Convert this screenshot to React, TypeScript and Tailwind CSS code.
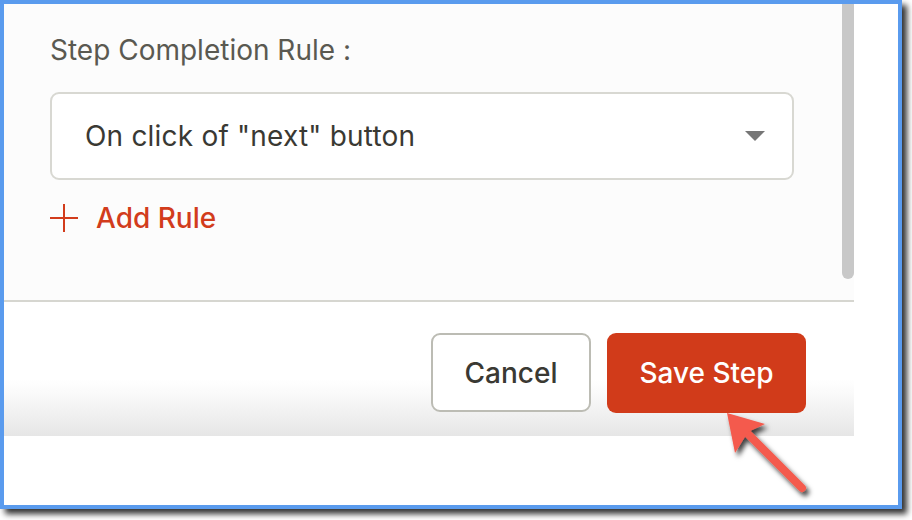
import React from "react";

export default function App() {
  return (
    <div
      className="relative w-[912px] h-[520px] bg-white overflow-hidden"
      style={{ fontFamily: "Inter, 'Noto Sans', sans-serif" }}
    >
      <div className="w-[902px] h-[509px] border-4 border-[#5a9bee] bg-white flex shadow-[5px_5px_6px_rgba(0,0,0,0.8)]">
        <div className="w-[850px] flex flex-col">
          <div className="h-[296px] bg-[#fcfcfc] flex">
            <div className="flex-1 pl-[46px] flex flex-col">
              <div className="mt-[32px] h-[28px] leading-[28px] text-[28px] text-[#5a5951]">
                Step Completion Rule :
              </div>
              <div className="mt-[28px] w-[744px] h-[88px] bg-white border-2 border-[#d8d8d2] rounded-[9px] flex items-center pl-[33px] pr-[27px]">
                <span className="flex-1 text-[28px] leading-[28px] text-[#3a3933] tracking-[0.2px]">
                  On click of "next" button
                </span>
                <svg width="20" height="10" viewBox="0 0 20 10">
                  <path d="M0 0 H20 L10 10 Z" fill="#767676" />
                </svg>
              </div>
              <div className="mt-[24px] h-[28px] flex items-center gap-[18px]">
                <svg width="28" height="28" viewBox="0 0 28 28">
                  <path d="M14 0 V28 M0 14 H28" stroke="#d23c1c" strokeWidth="2" />
                </svg>
                <span className="text-[28px] leading-[28px] font-medium text-[#d23c1c]">
                  Add Rule
                </span>
              </div>
            </div>
            <div className="w-[12px]">
              <div className="h-[275px] bg-[#c8c8c8] rounded-b-[6px]" />
            </div>
          </div>
          <div className="h-[2px] bg-[#d6d6d0]" />
          <div className="h-[134px] bg-[linear-gradient(to_bottom,#ffffff_0%,#ffffff_58%,#fafafa_68%,#e6e6e6_100%)] flex justify-end items-start pt-[31px] pr-[48px] gap-[16px]">
            <button className="w-[160px] h-[79px] bg-white border-2 border-[#bcbcb4] rounded-[9px] text-[28px] leading-[28px] font-medium text-[#3a3933] flex items-center justify-center">
              Cancel
            </button>
            <button className="w-[199px] h-[80px] bg-[#d13b1a] rounded-[9px] text-[28px] leading-[28px] font-medium text-white flex items-center justify-center">
              Save Step
            </button>
          </div>
        </div>
        <div className="flex-1 bg-white" />
      </div>
      <svg
        className="absolute left-0 top-0 pointer-events-none"
        width="912"
        height="520"
        viewBox="0 0 912 520"
      >
        <defs>
          <filter id="sh" x="-50%" y="-50%" width="200%" height="200%">
            <feDropShadow dx="3" dy="4" stdDeviation="2.5" floodColor="#000" floodOpacity="0.75" />
          </filter>
        </defs>
        <g filter="url(#sh)">
          <line x1="802" y1="488" x2="742" y2="428" stroke="#f45a4d" strokeWidth="8" strokeLinecap="round" />
          <path d="M727 413 L765 424 L748 432 L735 453 Z" fill="#f45a4d" />
        </g>
      </svg>
    </div>
  );
}
